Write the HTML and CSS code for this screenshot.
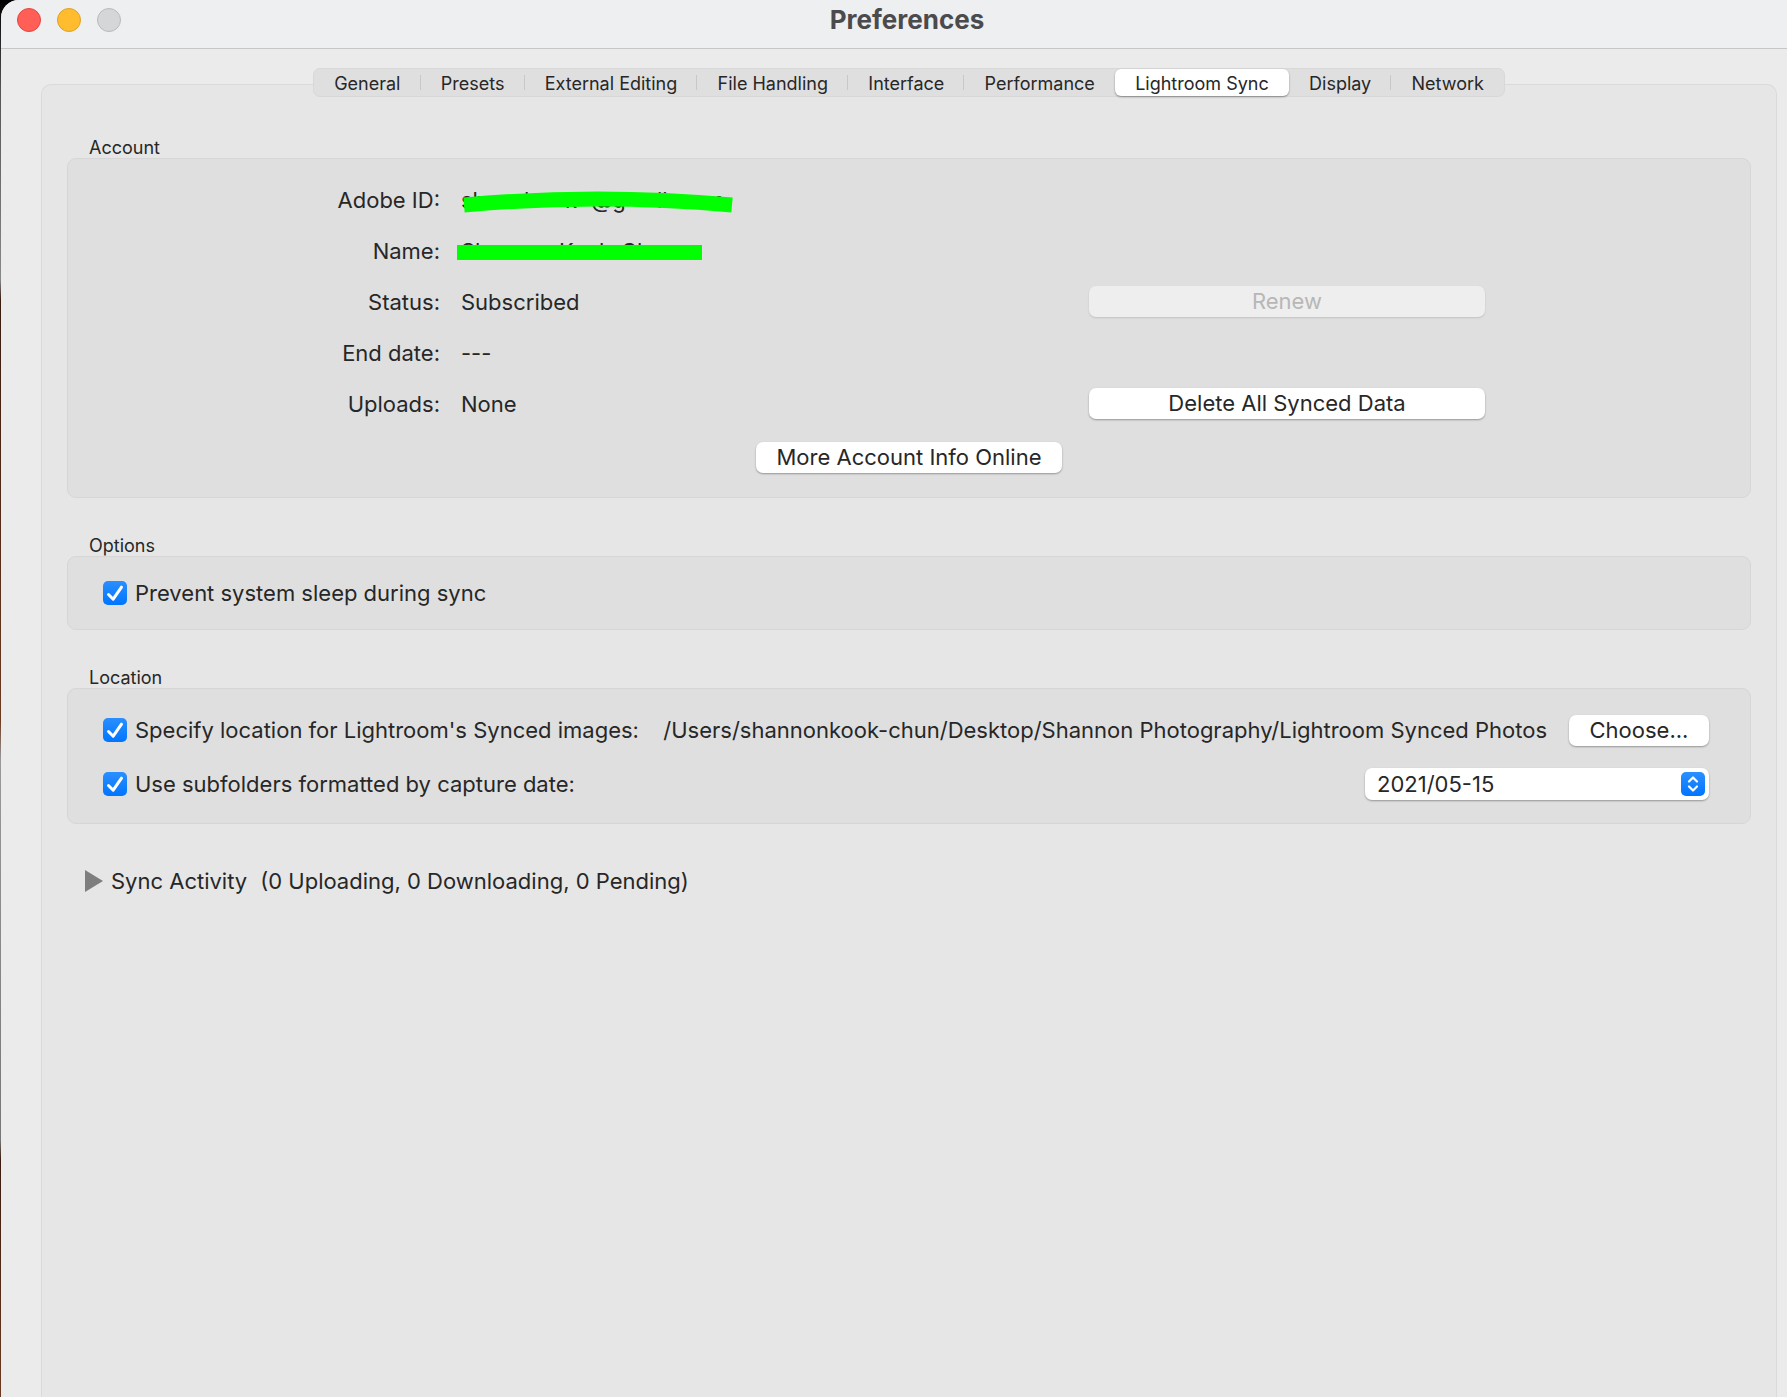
FILE: index.html
```html
<!DOCTYPE html>
<html lang="en">
<head>
<meta charset="utf-8">
<meta name="viewport" content="width=device-width, initial-scale=1">
<title>Preferences</title>
<link rel="stylesheet" href="styles.css">
</head>
<body>
<div class="window">
  <header class="titlebar">
    <div class="lights">
      <button class="light light-close" type="button" aria-label="Close"></button>
      <button class="light light-minimize" type="button" aria-label="Minimize"></button>
      <button class="light light-zoom" type="button" aria-label="Zoom" disabled></button>
    </div>
    <h1 class="title">Preferences</h1>
  </header>
  <main class="content">
    <nav class="tabs" aria-label="Preference panes">
      <button class="tab" type="button">General</button>
      <button class="tab" type="button">Presets</button>
      <button class="tab" type="button">External Editing</button>
      <button class="tab" type="button">File Handling</button>
      <button class="tab" type="button">Interface</button>
      <button class="tab tab-plain" type="button">Performance</button>
      <button class="tab tab-selected" type="button" aria-current="page">Lightroom Sync</button>
      <button class="tab" type="button">Display</button>
      <button class="tab tab-plain" type="button">Network</button>
    </nav>
    <div class="panel">
      <section class="group">
        <h2 class="group-title">Account</h2>
        <div class="box account">
          <dl class="facts">
            <div class="fact">
              <dt>Adobe ID:</dt>
              <dd class="redacted">
                <span class="scraps scraps-id"><span>sh</span><span>l</span><span>k</span><span>@g</span><span>ll</span><span>m</span></span>
                <svg class="marker marker-id" viewBox="0 0 270 24" aria-hidden="true"><path d="M1 15Q134 3 269 15" fill="none" stroke="#00ff00" stroke-width="15"/></svg>
              </dd>
            </div>
            <div class="fact">
              <dt>Name:</dt>
              <dd class="redacted">
                <span class="scraps scraps-name"><span>Sh</span><span>K</span><span>k</span><span>Ch</span></span>
                <span class="marker marker-name"></span>
              </dd>
            </div>
            <div class="fact">
              <dt>Status:</dt>
              <dd>Subscribed</dd>
              <dd class="fact-action"><button class="button button-wide" type="button" disabled>Renew</button></dd>
            </div>
            <div class="fact">
              <dt>End date:</dt>
              <dd>---</dd>
            </div>
            <div class="fact">
              <dt>Uploads:</dt>
              <dd>None</dd>
              <dd class="fact-action"><button class="button button-wide" type="button">Delete All Synced Data</button></dd>
            </div>
          </dl>
          <button class="button button-more" type="button">More Account Info Online</button>
        </div>
      </section>

      <section class="group">
        <h2 class="group-title">Options</h2>
        <div class="box options">
          <label class="check"><input type="checkbox" checked>Prevent system sleep during sync</label>
        </div>
      </section>

      <section class="group">
        <h2 class="group-title">Location</h2>
        <div class="box location">
          <div class="line">
            <label class="check"><input type="checkbox" checked>Specify location for Lightroom's Synced images:</label>
            <span class="path">/Users/shannonkook-chun/Desktop/Shannon Photography/Lightroom Synced Photos</span>
            <button class="button button-choose" type="button">Choose...</button>
          </div>
          <div class="line">
            <label class="check"><input type="checkbox" checked>Use subfolders formatted by capture date:</label>
            <span class="picker">
              <select aria-label="Subfolder date format"><option>2021/05-15</option></select>
              <svg class="picker-arrows" viewBox="0 0 24 24" aria-hidden="true">
                <defs><linearGradient id="blue" x2="0" y2="1"><stop stop-color="#2b8fff"/><stop offset="1" stop-color="#0075ff"/></linearGradient></defs>
                <rect width="24" height="24" rx="5" fill="url(#blue)"/>
                <path d="M8 9.500L12 5.500L16 9.500M8 14.500L12 18.500L16 14.500" fill="none" stroke="#fff" stroke-width="2.200" stroke-linecap="round" stroke-linejoin="round"/>
              </svg>
            </span>
          </div>
        </div>
      </section>

      <button class="activity" type="button" aria-expanded="false">
        <svg class="triangle" viewBox="0 0 18 22" aria-hidden="true"><path d="M0 0L18 11L0 22Z" fill="#7e7e7e"/></svg>
        <span>Sync Activity</span>
        <span class="activity-counts">(0 Uploading, 0 Downloading, 0 Pending)</span>
      </button>
    </div>
  </main>
</div>
</body>
</html>
```
FILE: styles.css
```css
* {
  box-sizing: border-box;
}

body {
  margin: 0;
  padding-left: 1px;
  background: linear-gradient(#000 0, #555 90px, #888 280px, #3a1c10 300px, #6b3a20 720px, #999 760px, #777 1140px, #3a1c10 1160px, #6b3a20 100%);
  color: #272727;
  font: 22px/26px Inter, "Liberation Sans", sans-serif;
}

h1, h2, dl, dd {
  margin: 0;
}

button, select {
  font: inherit;
  color: inherit;
}

.window {
  display: flex;
  flex-direction: column;
  min-height: 100vh;
  border-top-left-radius: 18px;
  background: #ebebeb;
  overflow: hidden;
}

.titlebar {
  display: grid;
  grid-template-columns: 1fr auto 1fr;
  height: 49px;
  padding: 0 0 9px 16px;
  align-items: center;
  border-bottom: 1px solid #c6c7c7;
  background: #eeeff1;
}

.lights {
  display: flex;
  gap: 16px;
}

.light {
  width: 24px;
  height: 24px;
  padding: 0;
  border: 1px solid;
  border-radius: 50%;
}

.light-close {
  border-color: #e2463f;
  background: #ff5f57;
}

.light-minimize {
  border-color: #e0a028;
  background: #febc2e;
}

.light-zoom {
  border-color: #b9babc;
  background: #d5d6d8;
}

.title {
  padding-left: 10px;
  color: #4b4b4d;
  font-size: 26px;
  font-weight: 700;
  line-height: 32px;
}

.content {
  display: flex;
  flex: 1;
  flex-direction: column;
  padding: 19px 10px 0 40px;
}

.tabs {
  z-index: 1;
  display: flex;
  align-self: center;
  width: 1192px;
  max-width: 100%;
  height: 29px;
  margin-bottom: -13px;
  border: 1px solid #d8d8d8;
  border-radius: 7px;
  background: #dfdfdf;
}

.tab {
  display: flex;
  flex: 1 0 auto;
  align-items: center;
  justify-content: center;
  padding: 2px 0 0;
  border: 0;
  background: none;
  font-size: 18px;
  line-height: 25px;
  white-space: nowrap;
  position: relative;
}

.tab:not(.tab-plain, .tab-selected)::after {
  content: "";
  position: absolute;
  right: 0;
  top: 6px;
  width: 1px;
  height: 15px;
  background: #c8c8c8;
}

.tab-selected {
  border-radius: 6px;
  background: #fff;
  box-shadow: 0 1px 2px #0006;
}

.panel {
  flex: 1;
  padding: 53px 25px 0;
  border: 1px solid #dadada;
  border-bottom: 0;
  border-radius: 10px 10px 0 0;
  background: #e6e6e6;
}

.group {
  margin-bottom: 38px;
}

.group-title {
  padding-left: 22px;
  font-size: 18px;
  font-weight: 400;
  line-height: 20px;
}

.box {
  border: 1px solid #d6d6d6;
  border-radius: 9px;
  background: #dfdfdf;
}

.account {
  display: flex;
  flex-direction: column;
  align-items: center;
  padding: 15px 0 24px;
}

.facts {
  align-self: stretch;
  margin-bottom: 13px;
}

.fact {
  display: grid;
  grid-template-columns: 372px 1fr 396px 244px;
  align-items: center;
  column-gap: 21px;
  height: 51px;
}

.fact dt {
  text-align: right;
}

.fact-action {
  display: flex;
}

.redacted {
  position: relative;
}

.scraps {
  display: grid;
}

.scraps-id {
  grid-template-columns: 63px 41px 26px 66px 48px 30px;
}

.scraps-name {
  grid-template-columns: 98px 40px 22px 30px;
}

.marker {
  position: absolute;
}

.marker-id {
  top: 3px;
  left: 2px;
  width: 270px;
  height: 24px;
}

.marker-name {
  top: 7px;
  left: -4px;
  width: 245px;
  height: 15px;
  background: #00ff00;
}

.button {
  height: 31px;
  padding: 0;
  border: 0;
  border-radius: 7px;
  background: #fff;
  box-shadow: 0 1px 2px #0005;
  line-height: 31px;
}

.button:disabled {
  background: #eee;
  box-shadow: 0 1px 2px #0002;
  color: #b7b7b7;
}

.button-wide {
  width: 100%;
}

.button-more {
  width: 306px;
}

.button-choose {
  width: 140px;
  margin-left: 22px;
}

.options {
  display: flex;
  align-items: center;
  height: 74px;
  padding: 0 35px;
}

.location {
  display: flex;
  flex-direction: column;
  gap: 22px;
  padding: 25px 41px 23px 35px;
}

.line {
  display: flex;
  align-items: center;
  justify-content: space-between;
  height: 32px;
}

.check {
  display: flex;
  align-items: center;
  gap: 8px;
  white-space: nowrap;
}

.check input {
  appearance: none;
  width: 24px;
  height: 24px;
  margin: 0;
  border-radius: 5px;
  background: url('data:image/svg+xml,<svg xmlns="http://www.w3.org/2000/svg" viewBox="0 0 24 24"><path d="M5.500 13.500L10.200 18.200L18.500 6.200" fill="none" stroke="white" stroke-width="3" stroke-linecap="round" stroke-linejoin="round"/></svg>'), linear-gradient(#2b8fff, #0075ff);
}

.path {
  margin-left: auto;
  white-space: nowrap;
}

.picker {
  display: flex;
  position: relative;
  width: 344px;
}

.picker select {
  appearance: none;
  width: 100%;
  height: 32px;
  padding: 0 40px 0 12px;
  border: 0;
  border-radius: 7px;
  background: #fff;
  box-shadow: 0 1px 2px #0005;
}

.picker-arrows {
  position: absolute;
  top: 4px;
  right: 4px;
  width: 24px;
  height: 24px;
  pointer-events: none;
}

.activity {
  display: flex;
  align-items: center;
  gap: 8px;
  margin: 44px 0 0 18px;
  padding: 0;
  border: 0;
  background: none;
}

.triangle {
  width: 18px;
  height: 22px;
}

.activity-counts {
  margin-left: 5px;
}
```
